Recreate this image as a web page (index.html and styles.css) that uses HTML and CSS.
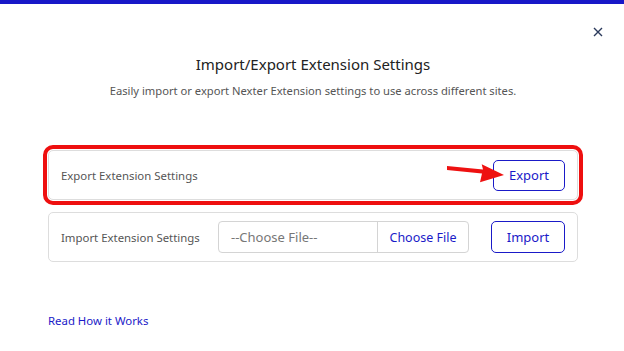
FILE: index.html
```html
<!DOCTYPE html>
<html>
<head>
<meta charset="utf-8">
<link rel="stylesheet" href="styles.css">
</head>
<body>
<div class="topbar"></div>
<div class="modal">
  <div class="close-row">
    <svg class="close" width="10" height="10" viewBox="0 0 10 10"><path d="M1 1L9 9M9 1L1 9" stroke="#2b3a5c" stroke-width="1.4" fill="none"/></svg>
  </div>
  <h1 class="title">Import/Export Extension Settings</h1>
  <p class="subtitle">Easily import or export Nexter Extension settings to use across different sites.</p>
  <div class="cards">
    <div class="card highlight">
      <span class="label">Export Extension Settings</span>
      <button class="btn btn-export">Export</button>
    </div>
    <div class="card">
      <span class="label">Import Extension Settings</span>
      <div class="file">
        <span class="file-name">--Choose File--</span>
        <span class="file-btn">Choose File</span>
      </div>
      <button class="btn btn-import">Import</button>
    </div>
  </div>
  <a class="link" href="#">Read How it Works</a>
</div>
<svg class="arrow" width="70" height="35" viewBox="0 0 70 35">
  <path d="M7 11 L43 14.5 L41.7 9.3 L64 20 L40 27.3 L42 18.5 L7 15 Z" fill="#ee1111"/>
</svg>
</body>
</html>
```
FILE: styles.css
```css
* { box-sizing: border-box; }
html, body { margin: 0; padding: 0; background: #fff; }
body {
  font-family: "Noto Sans", "Open Sans", sans-serif;
  width: 624px;
  height: 351px;
  overflow: hidden;
  position: relative;
}
.topbar { height: 4px; background: #1717c8; }
.modal { padding: 0 46px 0 48px; }
.close-row {
  display: flex;
  justify-content: flex-end;
  height: 48px;
  padding-top: 23px;
  margin-right: -25px;
}
.close { display: block; }
.title {
  margin: 0;
  text-align: center;
  font-size: 15px;
  font-weight: 400;
  color: #222;
  line-height: 24px;
}
.subtitle {
  margin: 5px 0 0;
  text-align: center;
  font-size: 11.2px;
  color: #555;
  line-height: 20px;
}
.cards {
  margin-top: 49px;
  display: flex;
  flex-direction: column;
  gap: 12px;
}
.card {
  height: 50px;
  border: 1px solid #dddddd;
  border-radius: 5px;
  display: flex;
  align-items: center;
  padding: 0 12px;
}
.card.highlight {
  outline: 4px solid #ee0f0f;
  outline-offset: 1px;
  border-radius: 5px;
}
.label {
  font-size: 11.4px;
  color: #555;
  flex: 1;
}
.btn {
  font-family: inherit;
  background: #fff;
  border: 1px solid #1a1ac8;
  color: #1a1ac8;
  border-radius: 5px;
  font-size: 13px;
  padding: 0;
}
.btn-export { width: 72px; height: 31px; }
.btn-import { width: 74px; height: 32px; margin-left: 22px; }
.file {
  width: 251px;
  height: 32px;
  border: 1px solid #d4d4d4;
  border-radius: 4px;
  display: flex;
  align-items: center;
}
.file-name {
  flex: 1;
  padding-left: 12px;
  font-size: 13px;
  color: #777;
}
.file-btn {
  width: 91px;
  height: 100%;
  border-left: 1px solid #d4d4d4;
  display: flex;
  align-items: center;
  justify-content: center;
  font-size: 12.5px;
  color: #1a1ac8;
}
.link {
  display: inline-block;
  margin-top: 51px;
  font-size: 11.4px;
  color: #1a1ac8;
  text-decoration: none;
}
.arrow {
  position: absolute;
  left: 440px;
  top: 155px;
}
```
